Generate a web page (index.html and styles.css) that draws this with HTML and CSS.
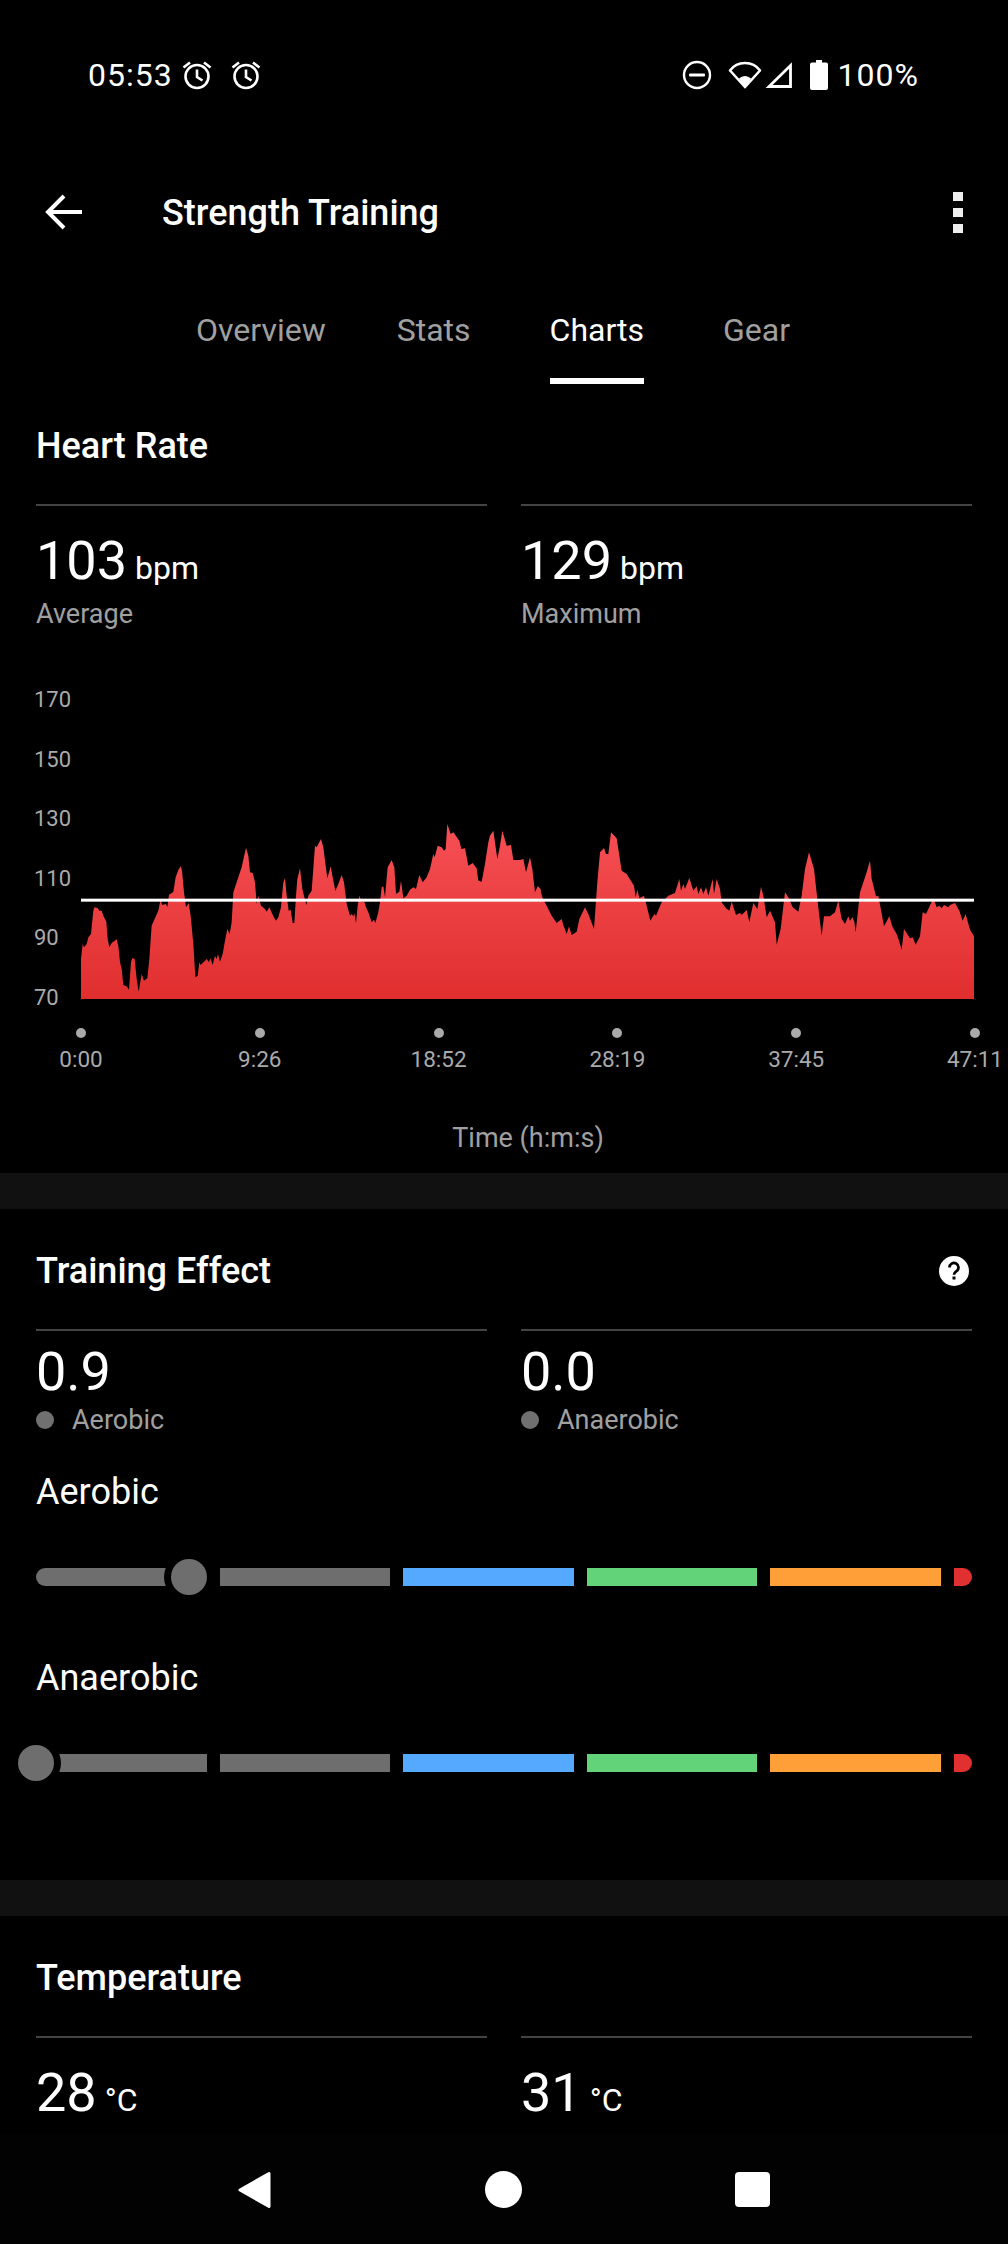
FILE: index.html
```html
<!DOCTYPE html>
<html lang="en">
<head>
<meta charset="utf-8">
<title>Strength Training</title>
<link rel="stylesheet" href="styles.css">
</head>
<body>
<div class="screen">
  <header class="status">
    <div class="status-left">
      <span class="status-text">05:53</span>
      <svg class="alarm" viewBox="0 0 30 30"><circle cx="15" cy="16.5" r="11.5"/><path d="M15 9.5v7.5l5.5 3.5M1.5 7.5 8 2.5M28.5 7.5 22 2.5"/></svg>
      <svg class="alarm second" viewBox="0 0 30 30"><circle cx="15" cy="16.5" r="11.5"/><path d="M15 9.5v7.5l5.5 3.5M1.5 7.5 8 2.5M28.5 7.5 22 2.5"/></svg>
    </div>
    <div class="status-right">
      <svg class="ico-dnd" viewBox="0 0 30 30"><circle cx="15" cy="15" r="13" fill="none" stroke="#fff" stroke-width="2.4"/><rect x="7" y="13.4" width="16" height="3.2" rx="1" fill="#fff"/></svg>
      <svg class="ico-wifi" viewBox="0 0 34 28"><path d="M2 9.500C6 4 11 2 17 2s11 2 15 7.500L17 26Z" fill="none" stroke="#fff" stroke-width="2.600" stroke-linejoin="round"/><path d="M11 17.500C13 16 15 15 17 15s4 1 6 2.500L17 27.500Z" fill="#fff"/></svg>
      <svg class="ico-signal" viewBox="0 0 28 28"><path d="M25.500 4.500V25.500H4Z" fill="none" stroke="#fff" stroke-width="2.800"/></svg>
      <svg class="ico-batt" viewBox="0 0 18 30"><path d="M6 0h6v2.500h4a2 2 0 0 1 2 2V28a2 2 0 0 1-2 2H2a2 2 0 0 1-2-2V4.500a2 2 0 0 1 2-2h4Z" fill="#fff"/></svg>
      <span class="status-text">100%</span>
    </div>
  </header>

  <nav class="toolbar">
    <svg class="back" viewBox="0 0 38 36"><path d="M37 18H3M19 2 3 18l16 16" fill="none" stroke="#fff" stroke-width="4"/></svg>
    <h1 class="title">Strength Training</h1>
    <div class="menu"><i></i><i></i><i></i></div>
  </nav>

  <div class="tabs">
    <span class="tab">Overview</span>
    <span class="tab">Stats</span>
    <span class="tab active">Charts</span>
    <span class="tab">Gear</span>
  </div>

  <section class="card heart">
    <h2 class="heading">Heart Rate</h2>
    <div class="stats">
      <div class="stat"><div class="value">103<small>bpm</small></div><div class="label">Average</div></div>
      <div class="stat"><div class="value">129<small>bpm</small></div><div class="label">Maximum</div></div>
    </div>
  </section>

  <div class="chart">
    <div class="plot-row">
      <div class="y-axis"><span>170</span><span>150</span><span>130</span><span>110</span><span>90</span><span>70</span></div>
      <svg class="plot" viewBox="63 -300 2679 900">
        <defs>
          <linearGradient id="hr" gradientUnits="userSpaceOnUse" x1="0" y1="75" x2="0" y2="600">
            <stop offset="0" stop-color="#f65055"/><stop offset="1" stop-color="#e02e2e"/>
          </linearGradient>
        </defs>
        <path fill="url(#hr)" d="M63 600V480L68 435 72 445 80 435 85 415 93 405 100 335 103 325 113 327 118 335 125 335 130 350 139 368 143 420 148 445 155 432 170 421 175 440 180 488 185 510 190 558 200 562 207 572 213 490 217 477 224 480 230 540 236 578 245 525 252 545 262 538 268 480 275 380 280 368 295 335 302 300 306 318 318 315 322 325 327 287 340 279 347 235 355 213 362 202 366 215 372 280 378 325 386 312 392 350 400 435 406 535 413 530 418 490 422 498 435 485 440 480 447 490 451 478 458 498 465 470 470 480 474 465 480 488 488 465 495 425 502 390 509 405 515 370 520 280 530 250 545 205 558 146 565 170 570 220 578 222 585 250 590 315 595 290 603 320 615 330 620 338 628 325 640 352 648 365 655 355 663 325 670 250 675 237 680 290 686 335 692 332 698 372 703 372 708 290 712 240 720 208 727 270 733 295 739 318 745 290 755 275 765 140 770 145 783 120 790 145 797 200 802 238 812 202 820 245 826 275 835 255 845 228 852 250 860 315 870 350 875 345 880 352 883 342 888 372 893 320 898 290 905 310 912 305 918 325 925 340 935 370 942 362 946 372 955 340 960 310 965 265 970 262 975 295 983 205 995 183 1003 205 1008 285 1018 278 1023 245 1030 298 1040 290 1050 272 1060 265 1068 270 1078 228 1088 250 1100 235 1110 210 1120 165 1124 175 1133 140 1145 145 1152 155 1157 150 1162 75 1172 105 1180 100 1198 125 1204 150 1215 148 1225 200 1238 192 1250 208 1255 245 1265 248 1275 195 1285 130 1290 110 1300 95 1312 180 1320 140 1327 95 1340 140 1353 138 1360 183 1380 183 1390 180 1398 220 1410 175 1417 210 1425 280 1433 262 1442 270V600Z"/>
        <g transform="translate(1380 0)">
          <path fill="url(#hr)" d="M53 600V262L60 270 68 298 80 320 95 350 110 372 125 360 130 378 140 405 147 382 155 408 170 398 178 360 195 325 205 345 222 390 232 250 240 160 252 147 258 165 265 165 273 100 290 118 305 215 320 225 342 260 347 295 352 272 358 298 372 290 380 320 391 365 403 345 408 350 425 310 445 290 465 282 478 240 483 275 490 255 495 270 508 237 520 275 530 262 535 285 543 265 550 285 558 265 565 290 578 240 582 285 590 240 600 270 605 310 618 328 628 335 635 308 648 348 660 342 665 348 680 333 688 370 700 312 712 330 723 263 730 290 740 355 750 335 765 370 770 437 782 390 795 280 805 295 818 325 835 338 845 290 855 210 867 160 882 210 892 300 905 410 912 352 930 352 945 340 955 305 965 360 975 375 985 352 990 365 997 355 1003 368 1007 400 1020 280 1035 235 1040 220 1050 185 1055 240 1068 292 1075 290 1092 382 1108 352 1118 385 1130 405 1137 425 1145 452 1152 390 1170 418 1178 415 1187 437 1200 412 1208 340 1218 345 1225 330 1240 298 1250 325 1258 320 1265 328 1272 318 1285 325 1290 318 1305 312 1318 335 1328 365 1337 345 1350 392 1362 412V600Z"/>
        </g>
        <rect x="63" y="299" width="2679" height="9" fill="#fff"/>
      </svg>
    </div>
    <div class="x-axis">
      <div class="tick"><b></b><span>0:00</span></div>
      <div class="tick"><b></b><span>9:26</span></div>
      <div class="tick"><b></b><span>18:52</span></div>
      <div class="tick"><b></b><span>28:19</span></div>
      <div class="tick"><b></b><span>37:45</span></div>
      <div class="tick"><b></b><span>47:11</span></div>
    </div>
    <div class="x-title">Time (h:m:s)</div>
  </div>

  <div class="band"></div>

  <section class="card effect">
    <div class="heading-row">
      <h2 class="heading">Training Effect</h2>
      <svg class="help" viewBox="0 0 30 30"><circle cx="15" cy="15" r="15" fill="#fff"/><path d="M10.500 11.500a4.500 4.500 0 1 1 7 3.700c-1.500 1-2.500 1.800-2.500 3.600" fill="none" stroke="#000" stroke-width="2.800"/><rect x="13.500" y="20.500" width="3" height="3" fill="#000"/></svg>
    </div>
    <div class="stats">
      <div class="stat"><div class="value tight">0.9</div><div class="label dotted"><i></i>Aerobic</div></div>
      <div class="stat"><div class="value tight">0.0</div><div class="label dotted"><i></i>Anaerobic</div></div>
    </div>
    <h3 class="sub first">Aerobic</h3>
    <div class="scale">
      <span class="seg grey seg-cut"></span><span class="seg grey"></span><span class="seg blue"></span><span class="seg green"></span><span class="seg orange"></span><span class="seg red"></span>
      <span class="thumb aerobic"></span>
    </div>
    <h3 class="sub">Anaerobic</h3>
    <div class="scale">
      <span class="seg grey"></span><span class="seg grey"></span><span class="seg blue"></span><span class="seg green"></span><span class="seg orange"></span><span class="seg red"></span>
      <span class="thumb anaerobic"></span>
    </div>
  </section>

  <div class="band second"></div>

  <section class="card temp">
    <h2 class="heading">Temperature</h2>
    <div class="stats">
      <div class="stat"><div class="value">28<small>°C</small></div></div>
      <div class="stat"><div class="value">31<small>°C</small></div></div>
    </div>
  </section>

  <footer class="navbar">
    <svg class="nav-back" viewBox="0 0 34 38"><path d="M2 19 31 2.500V35.500Z" fill="#fff" stroke="#fff" stroke-width="3" stroke-linejoin="round"/></svg>
    <span class="nav-home"></span>
    <span class="nav-recent"></span>
  </footer>
</div>
</body>
</html>
```
FILE: styles.css
```css
* { box-sizing: border-box; }
html, body { margin: 0; padding: 0; background: #000; }
body { font-family: Roboto, "Liberation Sans", sans-serif; color: #fff; }
.screen { position: relative; width: 1008px; height: 2244px; overflow: hidden; background: #000; }

.status { height: 150px; display: flex; justify-content: space-between; align-items: center; padding: 0 89px 0 88px; }
.status-left, .status-right { display: flex; align-items: center; }
.status-text { font-size: 32px; letter-spacing: 1px; line-height: 36px; }
.alarm { width: 30px; height: 30px; margin-left: 9px; fill: none; stroke: #fff; stroke-width: 2.6; }
.alarm.second { margin-left: 19px; }
.ico-dnd { width: 30px; height: 30px; }
.ico-wifi { width: 34px; height: 28px; margin-left: 16px; }
.ico-signal { width: 28px; height: 28px; margin-left: 3px; }
.ico-batt { width: 18px; height: 30px; margin-left: 17px; margin-right: 10px; }

.toolbar { height: 124px; display: flex; align-items: center; padding: 0 45px; }
.back { width: 38px; height: 36px; }
.title { margin: 2px 0 0 79px; font-size: 36px; font-weight: 500; flex: 1; line-height: 40px; }
.menu { display: flex; flex-direction: column; gap: 7px; }
.menu i { display: block; width: 10px; height: 9px; background: #eee; }

.tabs { height: 110px; display: flex; padding-left: 196px; gap: 71px; }
.tab { font-size: 32px; line-height: 112px; color: #a0a0a0; height: 110px; }
.tab.active { color: #fff; border-bottom: 6px solid #fff; margin: 0 8px; }

.card { padding: 0 36px; }
.heading { margin: 0; font-size: 36px; font-weight: 500; line-height: 40px; }
.heart { padding-top: 42px; }
.stats { display: grid; grid-template-columns: 451px 451px; gap: 34px; margin-top: 38px; }
.stat { border-top: 2px solid #444; }
.value { font-size: 54px; line-height: 64px; margin-top: 23px; }
.value small { font-size: 32px; margin-left: 8px; }
.label { font-size: 27px; line-height: 34px; color: #a0a0a0; margin-top: -3px; }

.chart { height: 542px; padding-top: 22px; }
.plot-row { display: flex; align-items: stretch; height: 300px; margin-top: 46px; padding-left: 34px; }
.y-axis { width: 47px; height: 334px; margin-top: -17px; display: flex; flex-direction: column; justify-content: space-between; font-size: 22px; line-height: 36px; color: #aaa; }
.plot { width: 893px; height: 300px; display: block; }
.x-axis { display: flex; justify-content: space-between; width: 894px; margin: 29px 0 0 81px; }
.tick { width: 0; display: flex; flex-direction: column; align-items: center; }
.tick b { width: 10px; height: 10px; flex: none; border-radius: 50%; background: #aaa; }
.tick span { font-size: 22.500px; line-height: 28px; color: #aaa; margin-top: 7px; white-space: nowrap; }
.x-title { text-align: center; font-size: 27px; line-height: 32px; color: #a0a0a0; margin: 49px 0 0 48px; }

.band { height: 36px; background: #111; }

.effect { height: 671px; padding-top: 42px; }
.heading-row { display: flex; justify-content: space-between; align-items: center; }
.help { width: 30px; height: 30px; margin-right: 3px; }
.value.tight { margin-top: 9px; }
.label.dotted { display: flex; align-items: center; margin-top: -1px; }
.label.dotted i { width: 18px; height: 18px; border-radius: 50%; background: #707070; margin-right: 18px; }
.sub { margin: 0; font-size: 36px; font-weight: 400; line-height: 40px; }
.sub.first { margin-top: 35px; }
.scale { position: relative; display: flex; gap: 13px; margin: 56px 0 72px; }
.seg { width: 171px; height: 18px; display: block; }
.grey { background: #6e6e6e; }
.blue { background: #55aaff; }
.green { background: #62d378; }
.orange { background: #ff9f38; }
.red { width: 18px; background: #e03030; border-radius: 0 9px 9px 0; }
.seg-cut { border-radius: 9px 0 0 9px; }
.thumb { position: absolute; top: -9px; width: 36px; height: 36px; border-radius: 50%; background: #6e6e6e; box-shadow: 0 0 0 7px #000; }
.thumb.aerobic { left: 135px; }
.thumb.anaerobic { left: -18px; }

.temp { padding-top: 42px; }

.navbar { position: absolute; left: 0; right: 0; bottom: 0; height: 109px; background: #020202; }
.nav-back { position: absolute; left: 238px; top: 36px; width: 34px; height: 38px; }
.nav-home { position: absolute; left: 485px; top: 36px; width: 37px; height: 37px; border-radius: 50%; background: #fff; }
.nav-recent { position: absolute; left: 735px; top: 37px; width: 35px; height: 35px; border-radius: 4px; background: #fff; }
```
